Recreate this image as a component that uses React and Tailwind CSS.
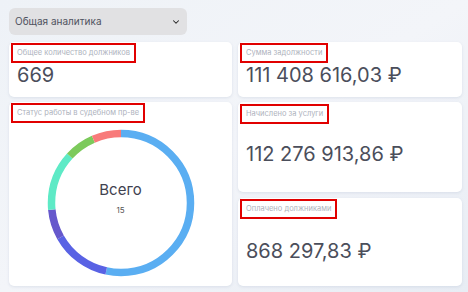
import React from 'react';

const segments = [
  { value: 8, color: '#5aaef2' },
  { value: 2, color: '#5962e4' },
  { value: 1, color: '#6658cc' },
  { value: 2, color: '#5eeac6' },
  { value: 1, color: '#7cca5c' },
  { value: 1, color: '#f87a7a' },
];

const Donut = () => {
  const total = segments.reduce((s, x) => s + x.value, 0);
  const r = 69.5;
  const c = 2 * Math.PI * r;
  let offset = 0;
  return (
    <div className="relative w-[150px] h-[150px]">
      <svg width="150" height="150" viewBox="0 0 150 150" className="-rotate-90">
        {segments.map((s, i) => {
          const len = (s.value / total) * c;
          const el = (
            <circle
              key={i}
              cx="75"
              cy="75"
              r={r}
              fill="none"
              stroke={s.color}
              strokeWidth="7.5"
              strokeDasharray={`${len} ${c - len}`}
              strokeDashoffset={-offset}
            />
          );
          offset += len;
          return el;
        })}
      </svg>
      <div className="absolute inset-0 flex flex-col items-center justify-center">
        <span className="text-[15px] text-[#3f4250] leading-none mt-[-10px]">Всего</span>
        <span className="text-[8px] text-[#555] mt-[9px] leading-none">15</span>
      </div>
    </div>
  );
};

const Label = ({ children }) => (
  <span className="block w-fit border-2 border-[#e10000] px-[4px] py-[3px] text-[7.5px] leading-[10px] text-[#aeb2bd]">
    {children}
  </span>
);

const Card = ({ label, children, className = '' }) => (
  <div className={`bg-white rounded-[5px] shadow-[0_1px_3px_rgba(120,140,170,0.18)] pl-[2px] pt-[1px] flex flex-col items-start ${className}`}>
    <Label>{label}</Label>
    {children}
  </div>
);

const Amount = ({ children, className = '' }) => (
  <div className={`pl-[6px] text-[20px] leading-none text-[#4b4e5b] ${className}`}>{children}</div>
);

export default function App() {
  return (
    <div
      className="w-[468px] h-[292px] overflow-hidden bg-gradient-to-br from-[#eef2f7] via-[#f3f5f9] to-[#e8edf4] pl-[9px] pr-[6px] pt-[8px]"
      style={{ fontFamily: 'Inter, "Noto Sans", sans-serif' }}
    >
      <div className="w-[178px] h-[27px] rounded-[6px] bg-[#e1e1e3] flex items-center justify-between pl-[6px] pr-[6px]">
        <span className="text-[10px] text-[#505360]">Общая аналитика</span>
        <svg width="10" height="10" viewBox="0 0 24 24" fill="none" stroke="#222" strokeWidth="2.5" strokeLinecap="round" strokeLinejoin="round">
          <path d="M6 9l6 6 6-6" />
        </svg>
      </div>

      <div className="mt-[7px] grid grid-cols-[223px_224px] gap-x-[6px] gap-y-[5px] grid-rows-[55px_90px_89px]">
        <Card label="Общее количество должников">
          <Amount className="mt-[2px] pl-[4px]">669</Amount>
        </Card>
        <Card label="Сумма задолжности">
          <Amount className="mt-[2px]">111 408 616,03 ₽</Amount>
        </Card>

        <Card label="Статус работы в судебном пр-ве" className="row-span-2">
          <div className="self-stretch flex justify-center mt-[5px] ml-[-2px]">
            <Donut />
          </div>
        </Card>

        <Card label="Начислено за услуги" className="pt-[2px]">
          <Amount className="mt-[20px]">112 276 913,86 ₽</Amount>
        </Card>
        <Card label="Оплачено должниками" className="mt-[1px]">
          <Amount className="mt-[22px]">868 297,83 ₽</Amount>
        </Card>
      </div>
    </div>
  );
}
